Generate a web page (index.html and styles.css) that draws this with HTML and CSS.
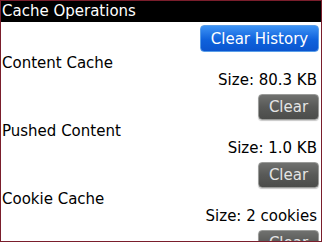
FILE: index.html
```html
<!DOCTYPE html>
<html>
<head>
<meta charset="utf-8">
<link rel="stylesheet" href="styles.css">
</head>
<body>
<div class="frame">
  <div class="header">Cache Operations</div>
  <div class="content">
    <div class="top-row"><button class="btn btn-blue">Clear History</button></div>
    <div class="section">
      <div class="label">Content Cache</div>
      <div class="size">Size: 80.3 KB</div>
      <div class="btn-row"><button class="btn btn-gray">Clear</button></div>
    </div>
    <div class="section">
      <div class="label">Pushed Content</div>
      <div class="size">Size: 1.0 KB</div>
      <div class="btn-row"><button class="btn btn-gray">Clear</button></div>
    </div>
    <div class="section">
      <div class="label">Cookie Cache</div>
      <div class="size">Size: 2 cookies</div>
      <div class="btn-row"><button class="btn btn-gray">Clear</button></div>
    </div>
  </div>
</div>
</body>
</html>
```
FILE: styles.css
```css
html, body {
  margin: 0;
  padding: 0;
  background: #fff;
}
.frame {
  width: 320px;
  height: 240px;
  border: 1px solid #7a1e2c;
  overflow: hidden;
  font-family: "DejaVu Sans", sans-serif;
  font-size: 15px;
  color: #000;
}
.header {
  background: #000;
  color: #fff;
  height: 21px;
  line-height: 20px;
  padding-left: 1px;
}
.content {
  display: flex;
  flex-direction: column;
  padding: 3px 2px 0 1px;
}
.top-row, .btn-row {
  display: flex;
  justify-content: flex-end;
}
.section {
  display: flex;
  flex-direction: column;
}
.label {
  height: 17px;
  line-height: 17px;
  margin-top: 3px;
}
.size {
  height: 17px;
  line-height: 17px;
  text-align: right;
  padding-right: 2px;
}
.btn-row {
  margin-top: 5px;
}
.btn {
  font-family: "DejaVu Sans", sans-serif;
  font-size: 15px;
  border-radius: 4px;
  padding: 0;
  margin: 0;
  display: flex;
  align-items: center;
  justify-content: center;
}
.btn-blue {
  width: 119px;
  height: 27px;
  color: #fff;
  background: linear-gradient(#3d93f5, #0f62dc 55%, #0a55cf);
  border: 1px solid #5a9ee8;
}
.btn-gray {
  width: 61px;
  height: 26px;
  color: #e4e4e4;
  background: linear-gradient(#70716f, #585957 50%, #4b4c4a);
  border: 1px solid #9a9b99;
  box-shadow: 0 1px 1px #c8c8c8;
}
```
